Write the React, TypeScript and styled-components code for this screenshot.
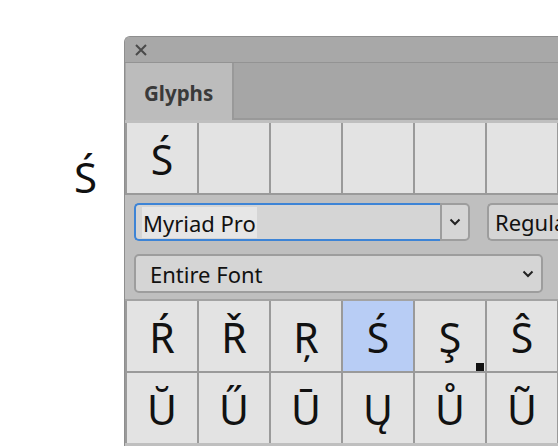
import styled, { createGlobalStyle } from 'styled-components';

const GlobalStyle = createGlobalStyle`
  html, body {
    margin: 0;
    padding: 0;
    background: #ffffff;
  }
  body {
    font-family: "Noto Sans", "Open Sans", sans-serif;
  }
`;

const Page = styled.div`
  display: flex;
  width: 558px;
  height: 446px;
  overflow: hidden;
  background: #ffffff;
`;

const Preview = styled.div`
  flex: 0 0 124px;
  display: flex;
  justify-content: flex-end;
  padding: 156px 27px 0 0;
  box-sizing: border-box;
  font-family: "Noto Sans", sans-serif;
  font-size: 42px;
  line-height: 1;
  color: #111;
`;

const Panel = styled.div`
  flex: 0 0 460px;
  margin-top: 36px;
  display: flex;
  flex-direction: column;
  background: #bfbfbf;
  border-left: 1px solid #8e8e8e;
  border-top: 1px solid #8e8e8e;
  border-top-left-radius: 6px;
  overflow: hidden;
`;

const TitleBar = styled.div`
  height: 25px;
  display: flex;
  align-items: center;
  padding-left: 9px;
  background: #a8a8a8;
  border-bottom: 1px solid #939393;
`;

const CloseButton = styled.button`
  width: 14px;
  height: 14px;
  padding: 0;
  border: 0;
  background: none;
  display: flex;
  align-items: center;
  justify-content: center;
`;

const TabBar = styled.div`
  height: 57px;
  display: flex;
  background: #a6a6a6;
`;

const Tab = styled.div`
  width: 106px;
  margin-left: 1px;
  display: flex;
  align-items: center;
  padding: 2px 0 0 18px;
  box-sizing: border-box;
  background: #bcbcbc;
  font-size: 20.5px;
  font-weight: 700;
  color: #3a3a3a;
`;

const TabFill = styled.div`
  flex: 1;
  border-left: 2px solid #999;
  border-bottom: 2px solid #999;
`;

const Strip = styled.div`
  height: 3px;
  background: #bfbfbf;
`;

const CellRow = styled.div`
  display: grid;
  grid-template-columns: repeat(6, 70px);
  gap: 2px;
  padding-left: 2px;
  background: #9a9a9a;
`;

const GlyphGrid = styled(CellRow)`
  grid-template-rows: repeat(2, 70px);
`;

const RecentRow = styled(CellRow)`
  padding-bottom: 2px;
`;

const Cell = styled.div<{ $selected?: boolean }>`
  position: relative;
  height: 70px;
  display: flex;
  align-items: center;
  justify-content: center;
  padding-top: 2px;
  box-sizing: border-box;
  background: ${({ $selected }) => ($selected ? '#b8cdf5' : '#e3e3e3')};
  font-family: "Noto Sans", sans-serif;
  font-size: 41px;
  line-height: 1;
  color: #111;
`;

const Marker = styled.span`
  position: absolute;
  right: 1px;
  bottom: 0;
  width: 8px;
  height: 8px;
  background: #111;
`;

const Controls = styled.div`
  display: flex;
  flex-direction: column;
  gap: 13px;
  padding: 8px 0 6px 9px;
  border-bottom: 2px solid #a3a3a3;
`;

const ControlRow = styled.div`
  display: flex;
  gap: 17px;
`;

const Combo = styled.div`
  display: flex;
  height: 38px;
`;

const FontInput = styled.div`
  width: 306px;
  display: flex;
  align-items: center;
  padding-left: 6px;
  box-sizing: border-box;
  background: #d5d5d5;
  border: 2px solid #3d84d6;
  border-right: 0;
  border-radius: 5px 0 0 5px;
  font-size: 22px;
  color: #111;
`;

const Selected = styled.span`
  background: #e6e6e6;
  padding: 1px 1px 0;
`;

const ComboButton = styled.div`
  width: 30px;
  display: flex;
  align-items: center;
  justify-content: center;
  background: #d5d5d5;
  border: 2px solid #9d9d9d;
  border-radius: 0 5px 5px 0;
  box-sizing: border-box;
`;

const StyleInput = styled.div`
  width: 90px;
  display: flex;
  align-items: center;
  padding-left: 6px;
  box-sizing: border-box;
  background: #d5d5d5;
  border: 2px solid #9d9d9d;
  border-right: 0;
  border-radius: 5px 0 0 5px;
  font-size: 22px;
  color: #111;
  white-space: nowrap;
  overflow: hidden;
`;

const Select = styled.div`
  width: 409px;
  height: 39px;
  display: flex;
  align-items: center;
  justify-content: space-between;
  padding: 0 7px 0 14px;
  box-sizing: border-box;
  background: #d5d5d5;
  border: 2px solid #9d9d9d;
  border-radius: 5px;
  font-size: 22px;
  color: #111;
`;

const Chevron = () => (
  <svg width="12" height="8" viewBox="0 0 12 8">
    <path d="M1.5 1.5 L6 6 L10.5 1.5" fill="none" stroke="#222" strokeWidth="2" />
  </svg>
);

const recent = ['Ś', '', '', '', '', ''];
const glyphs = ['Ŕ', 'Ř', 'Ŗ', 'Ś', 'Ş', 'Ŝ', 'Ŭ', 'Ű', 'Ū', 'Ų', 'Ů', 'Ũ'];

export default function App() {
  return (
    <>
      <GlobalStyle />
      <Page>
        <Preview>Ś</Preview>
        <Panel>
          <TitleBar>
            <CloseButton aria-label="Close">
              <svg width="12" height="12" viewBox="0 0 12 12">
                <path d="M1 1 L11 11 M11 1 L1 11" stroke="#4a4a4a" strokeWidth="2" />
              </svg>
            </CloseButton>
          </TitleBar>
          <TabBar>
            <Tab>Glyphs</Tab>
            <TabFill />
          </TabBar>
          <Strip />
          <RecentRow>
            {recent.map((g, i) => (
              <Cell key={i}>{g}</Cell>
            ))}
          </RecentRow>
          <Controls>
            <ControlRow>
              <Combo>
                <FontInput>
                  <Selected>Myriad Pro</Selected>
                </FontInput>
                <ComboButton>
                  <Chevron />
                </ComboButton>
              </Combo>
              <Combo>
                <StyleInput>Regular</StyleInput>
              </Combo>
            </ControlRow>
            <Select>
              <span>Entire Font</span>
              <Chevron />
            </Select>
          </Controls>
          <GlyphGrid>
            {glyphs.map((g, i) => (
              <Cell key={i} $selected={i === 3}>
                {g}
                {i === 4 && <Marker />}
              </Cell>
            ))}
          </GlyphGrid>
        </Panel>
      </Page>
    </>
  );
}
